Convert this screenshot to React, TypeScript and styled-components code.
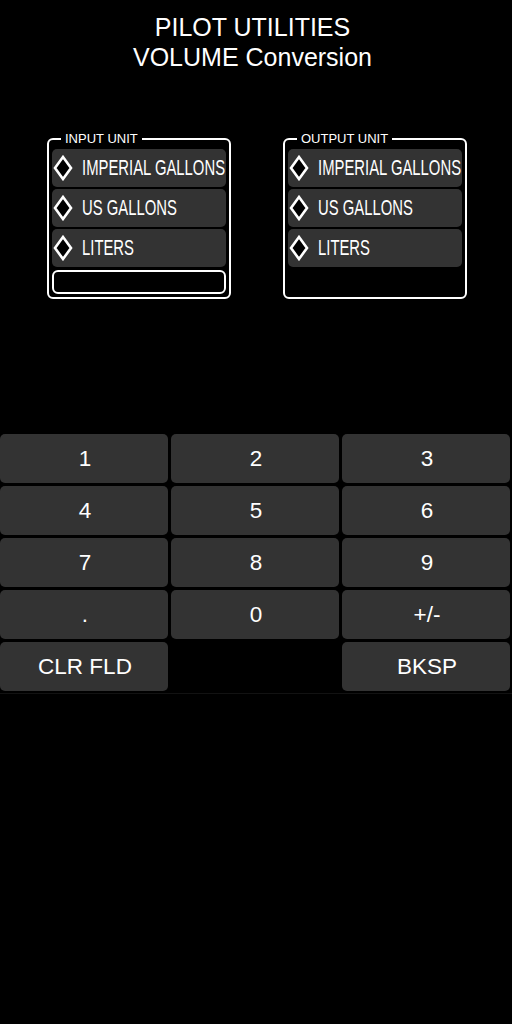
import React from "react";
import styled, { createGlobalStyle } from "styled-components";

const Global = createGlobalStyle`
  html, body { margin: 0; padding: 0; background: #000; }
  body { font-family: "Liberation Sans", Arial, sans-serif; color: #fff; }
  * { box-sizing: border-box; }
`;

const Page = styled.div`
  width: 512px;
  min-height: 1024px;
  background: #000;
  display: flex;
  flex-direction: column;
`;

const Title = styled.h1`
  margin: 0;
  padding: 12px 7px 0 0;
  font-family: "Liberation Sans", Arial, sans-serif;
  font-weight: normal;
  font-size: 25px;
  line-height: 30px;
  text-align: center;
  color: #fff;
`;

const Panels = styled.div`
  display: flex;
  align-items: stretch;
  gap: 52px;
  padding-left: 47px;
  margin-top: 59px;
`;

const Group = styled.fieldset`
  margin: 0;
  width: 184px;
  border: 2px solid #fff;
  border-radius: 6px;
  padding: 3px 3px 3px 3px;
  display: flex;
  flex-direction: column;
  gap: 2px;
  min-width: 0;
`;

const Legend = styled.legend`
  font-family: "Liberation Sans", Arial, sans-serif;
  font-size: 13px;
  line-height: 15px;
  padding: 0 4px;
  margin-left: 9px;
  color: #fff;
`;

const Option = styled.div`
  height: 38px;
  background: #333333;
  border-radius: 5px;
  display: flex;
  align-items: center;
  padding-left: 1px;
  overflow: hidden;
`;

const Diamond = styled.svg`
  width: 20px;
  height: 26px;
  flex: none;
`;

const OptionLabel = styled.span`
  display: inline-block;
  margin-left: 9px;
  font-family: "Liberation Sans", Arial, sans-serif;
  font-size: 22px;
  white-space: nowrap;
  color: #fff;
  transform: scaleX(0.675);
  transform-origin: left center;
`;

const ValueField = styled.div`
  height: 24px;
  margin-top: 1px;
  border: 2px solid #fff;
  border-radius: 6px;
  background: #000;
`;

const Keypad = styled.div`
  margin-top: 135px;
  display: grid;
  grid-template-columns: repeat(3, 168px);
  grid-auto-rows: 49px;
  gap: 3px;
  padding-bottom: 2px;
  border-bottom: 1px solid #121212;
`;

const Key = styled.div`
  background: #333333;
  border-radius: 5px;
  display: flex;
  align-items: center;
  justify-content: center;
  padding-left: 2px;
  font-family: "Liberation Sans", Arial, sans-serif;
  font-size: 22.5px;
  color: #fff;
`;

const Blank = styled.div``;

const units = ["IMPERIAL GALLONS", "US GALLONS", "LITERS"];

const DiamondIcon = () => (
  <Diamond viewBox="0 0 20 26">
    <polygon points="10,2 18,13 10,24 2,13" fill="#000" stroke="#fff" strokeWidth="2.6" strokeLinejoin="miter" />
  </Diamond>
);

const UnitGroup = ({ title, withField }: { title: string; withField?: boolean }) => (
  <Group>
    <Legend>{title}</Legend>
    {units.map((u) => (
      <Option key={u}>
        <DiamondIcon />
        <OptionLabel>{u}</OptionLabel>
      </Option>
    ))}
    {withField && <ValueField />}
  </Group>
);

const keys = ["1", "2", "3", "4", "5", "6", "7", "8", "9", ".", "0", "+/-", "CLR FLD", "", "BKSP"];

export default function App() {
  return (
    <>
      <Global />
      <Page>
        <Title>
          PILOT UTILITIES
          <br />
          VOLUME Conversion
        </Title>
        <Panels>
          <UnitGroup title="INPUT UNIT" withField />
          <UnitGroup title="OUTPUT UNIT" />
        </Panels>
        <Keypad>
          {keys.map((k, i) => (k ? <Key key={i}>{k}</Key> : <Blank key={i} />))}
        </Keypad>
      </Page>
    </>
  );
}
